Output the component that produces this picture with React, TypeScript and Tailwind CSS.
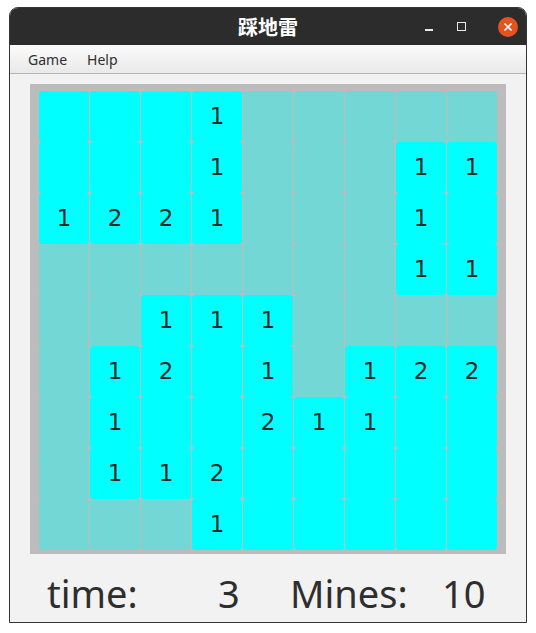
import { FC } from "react";

// 0 = hidden, -1 = open & empty, n = open with number
const board: number[][] = [
  [-1, -1, -1, 1, 0, 0, 0, 0, 0],
  [-1, -1, -1, 1, 0, 0, 0, 1, 1],
  [1, 2, 2, 1, 0, 0, 0, 1, -1],
  [0, 0, 0, 0, 0, 0, 0, 1, 1],
  [0, 0, 1, 1, 1, 0, 0, 0, 0],
  [0, 1, 2, -1, 1, 0, 1, 2, 2],
  [0, 1, -1, -1, 2, 1, 1, -1, -1],
  [0, 1, 1, 2, -1, -1, -1, -1, -1],
  [0, 0, 0, 1, -1, -1, -1, -1, -1],
];

const Cell: FC<{ v: number }> = ({ v }) => (
  <div
    className={`h-[51px] w-[50px] rounded-[3px] flex items-center justify-center text-[23px] text-[#2b2b2b] ${
      v === 0 ? "bg-[#72d7d5]" : "bg-[#00ffff]"
    }`}
    style={{ fontFamily: '"DejaVu Sans", sans-serif' }}
  >
    {v > 0 ? v : ""}
  </div>
);

const App: FC = () => {
  return (
    <div className="w-[536px] h-[633px] bg-white pt-[7px] pl-[9px]">
      <div
        className="w-[518px] h-[616px] flex flex-col rounded-t-[9px] overflow-hidden border border-[#353535]"
        style={{ fontFamily: '"Noto Sans", "Noto Sans CJK SC", sans-serif' }}
      >
        {/* title bar */}
        <div className="relative h-[37px] bg-[#2c2c2c] flex items-center justify-center">
          <span
            className="text-white text-[20px] font-bold"
            style={{ fontFamily: '"Noto Sans CJK SC", sans-serif' }}
          >
            踩地雷
          </span>
          <div className="absolute right-[8px] top-0 h-full flex items-center">
            <div className="w-[8px] h-[1.5px] bg-[#e8e8e8] mt-[7px]" />
            <div className="ml-[24px] w-[9px] h-[9px] border-[1.5px] border-[#e8e8e8]" />
            <div className="ml-[32px] w-[20px] h-[20px] rounded-full bg-[#e5531f] flex items-center justify-center">
              <svg width="10" height="10" viewBox="0 0 10 10">
                <path d="M1.5 1.5 L8.5 8.5 M8.5 1.5 L1.5 8.5" stroke="white" strokeWidth="1.6" />
              </svg>
            </div>
          </div>
        </div>
        {/* menu bar */}
        <div className="h-[29px] bg-gradient-to-b from-[#fbfbfb] to-[#e9e9e9] border-b border-[#b3b3b3] flex items-center pl-[18px] gap-[20px] text-[14px] text-[#2e2e2e]">
          <span>Game</span>
          <span>Help</span>
        </div>
        {/* content */}
        <div className="flex-1 bg-[#f2f2f2] flex flex-col items-center pt-[10px]">
          <div className="bg-[#bcbcbc] pl-[9px] pr-[9px] pt-[7px] pb-[4px]">
            <div className="grid grid-cols-[repeat(9,50px)] gap-x-[1px]">
              {board.flat().map((v, i) => (
                <Cell key={i} v={v} />
              ))}
            </div>
          </div>
          <div className="w-full flex items-baseline text-[38px] leading-none text-[#2e2e2e] mt-[20px] pl-[37px]">
            <span className="w-[171px]">time:</span>
            <span className="w-[72px]">3</span>
            <span className="w-[152px]">Mines:</span>
            <span>10</span>
          </div>
        </div>
      </div>
    </div>
  );
};

export default App;
